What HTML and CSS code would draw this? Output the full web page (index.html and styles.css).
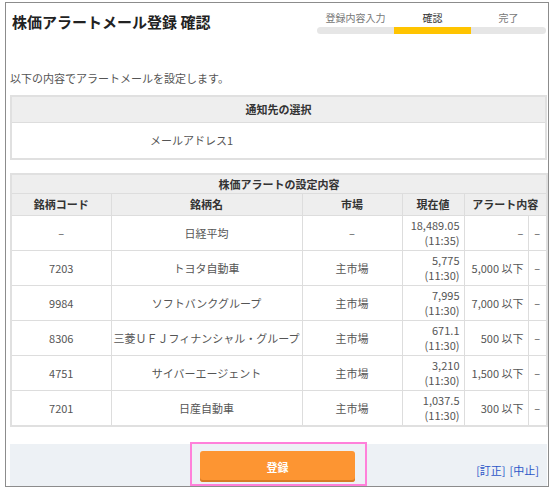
FILE: index.html
```html
<!DOCTYPE html>
<html lang="ja">
<head>
<meta charset="utf-8">
<title>株価アラートメール登録 確認</title>
<link rel="stylesheet" href="styles.css">
</head>
<body>
<div class="frame">
  <div class="header">
    <h1 class="title">株価アラートメール登録 確認</h1>
    <div class="steps">
      <div class="step-labels">
        <span class="step">登録内容入力</span>
        <span class="step current">確認</span>
        <span class="step">完了</span>
      </div>
      <div class="step-bar">
        <span class="seg"></span>
        <span class="seg active"></span>
        <span class="seg"></span>
      </div>
    </div>
  </div>

  <p class="intro">以下の内容でアラートメールを設定します。</p>

  <table class="tbl notify">
    <colgroup><col class="n1"><col class="n2"></colgroup>
    <tr class="cap"><th colspan="2">通知先の選択</th></tr>
    <tr class="addr"><td class="addr-cell">メールアドレス1</td><td></td></tr>
  </table>

  <table class="tbl alerts">
    <colgroup>
      <col class="c1"><col class="c2"><col class="c3"><col class="c4"><col class="c5"><col class="c6">
    </colgroup>
    <tr class="cap"><th colspan="6">株価アラートの設定内容</th></tr>
    <tr class="head">
      <th>銘柄コード</th><th>銘柄名</th><th>市場</th><th>現在値</th><th colspan="2">アラート内容</th>
    </tr>
    <tr>
      <td class="ctr">–</td><td class="ctr name">日経平均</td><td class="ctr">–</td>
      <td class="num">18,489.05<br>(11:35)</td><td class="num">–</td><td class="ctr">–</td>
    </tr>
    <tr>
      <td class="ctr">7203</td><td class="ctr name">トヨタ自動車</td><td class="ctr">主市場</td>
      <td class="num">5,775<br>(11:30)</td><td class="num">5,000 以下</td><td class="ctr">–</td>
    </tr>
    <tr>
      <td class="ctr">9984</td><td class="ctr name">ソフトバンクグループ</td><td class="ctr">主市場</td>
      <td class="num">7,995<br>(11:30)</td><td class="num">7,000 以下</td><td class="ctr">–</td>
    </tr>
    <tr>
      <td class="ctr">8306</td><td class="ctr name">三菱ＵＦＪフィナンシャル・グループ</td><td class="ctr">主市場</td>
      <td class="num">671.1<br>(11:30)</td><td class="num">500 以下</td><td class="ctr">–</td>
    </tr>
    <tr>
      <td class="ctr">4751</td><td class="ctr name">サイバーエージェント</td><td class="ctr">主市場</td>
      <td class="num">3,210<br>(11:30)</td><td class="num">1,500 以下</td><td class="ctr">–</td>
    </tr>
    <tr>
      <td class="ctr">7201</td><td class="ctr name">日産自動車</td><td class="ctr">主市場</td>
      <td class="num">1,037.5<br>(11:30)</td><td class="num">300 以下</td><td class="ctr">–</td>
    </tr>
  </table>

  <div class="actions">
    <div></div>
    <div class="highlight"><button class="btn" type="button">登録</button></div>
    <div class="links"><a href="#">[訂正]</a> <a href="#">[中止]</a></div>
  </div>
</div>
</body>
</html>
```

FILE: styles.css
```css
html, body {
  margin: 0;
  padding: 0;
  background: #ffffff;
}

body {
  font-family: "Noto Sans CJK JP", "Noto Sans", sans-serif;
  color: #444444;
  font-size: 11px;
}

.frame {
  box-sizing: border-box;
  width: 544px;
  height: 485px;
  margin: 2px 0 0 5px;
  border: 1px solid #8c8c8c;
  padding: 0 1px 0 4px;
  display: flex;
  flex-direction: column;
}

.header {
  display: flex;
  justify-content: space-between;
  align-items: flex-start;
}

.title {
  margin: 9px 0 0 2px;
  font-size: 15px;
  line-height: 20px;
  font-weight: bold;
  color: #222222;
}

.steps {
  width: 229px;
  margin-top: 8px;
  margin-right: 1px;
}

.step-labels {
  display: grid;
  grid-template-columns: 77px 77px 75px;
  text-align: center;
  font-size: 10px;
  line-height: 14px;
  color: #777777;
}

.step.current {
  color: #333333;
}

.step-bar {
  display: grid;
  grid-template-columns: 77px 77px 75px;
  height: 7px;
  margin-top: 2px;
  border-radius: 4px;
  overflow: hidden;
  background: #e6e6e6;
}

.seg.active {
  background: #ffc400;
}

.intro {
  margin: 36px 0 0 0;
  line-height: 16px;
  color: #555555;
}

.tbl {
  width: 100%;
  border-collapse: collapse;
  border: 2px solid #e0e0e0;
  table-layout: fixed;
}

.tbl th,
.tbl td {
  border: 1px solid #dddddd;
  padding: 0 3px;
  line-height: 15px;
}

.tbl th {
  background: #eeeeee;
  font-weight: bold;
  color: #333333;
}

.notify {
  margin-top: 9px;
}

.notify .n1 { width: 360px; }

.notify .cap th {
  height: 25px;
}

.notify .addr td {
  height: 35px;
  border-left: none;
  border-right: none;
}

.notify .addr-cell {
  text-align: center;
  color: #555555;
}

.alerts {
  margin-top: 13px;
}

.alerts .c1 { width: 100px; }
.alerts .c2 { width: 191px; }
.alerts .c3 { width: 100px; }
.alerts .c4 { width: 62px; }
.alerts .c5 { width: 64px; }
.alerts .c6 { width: 19px; }

.alerts .cap th {
  height: 18px;
}

.alerts .head th {
  height: 21px;
}

.alerts td {
  height: 34px;
  color: #555555;
}

.alerts td.name {
  padding: 0;
  white-space: nowrap;
}

.ctr {
  text-align: center;
}

.num {
  text-align: right;
  white-space: nowrap;
}

.alerts td.num {
  padding-right: 4px;
  padding-left: 0;
}

.actions {
  margin-top: 17px;
  flex: 1;
  background: #edf1f5;
  display: grid;
  grid-template-columns: 1fr auto 1fr;
  align-items: stretch;
}

.highlight {
  box-sizing: border-box;
  margin-top: -2px;
  border: 2px solid #ff80da;
  padding: 7px 10px 0 8px;
  width: 177px;
}

.btn {
  display: block;
  width: 155px;
  height: 31px;
  border: none;
  border-radius: 3px;
  background: #fd9532;
  box-shadow: inset 0 -2px 0 #d67a26;
  color: #ffffff;
  font-family: "Noto Sans CJK JP", sans-serif;
  font-size: 11px;
  font-weight: bold;
  padding: 0;
}

.links {
  display: flex;
  justify-content: flex-end;
  align-items: flex-end;
  padding: 0 8px 8px 0;
  line-height: 16px;
}

.links a {
  color: #2c56c8;
  text-decoration: none;
  margin-left: 4px;
}
```
